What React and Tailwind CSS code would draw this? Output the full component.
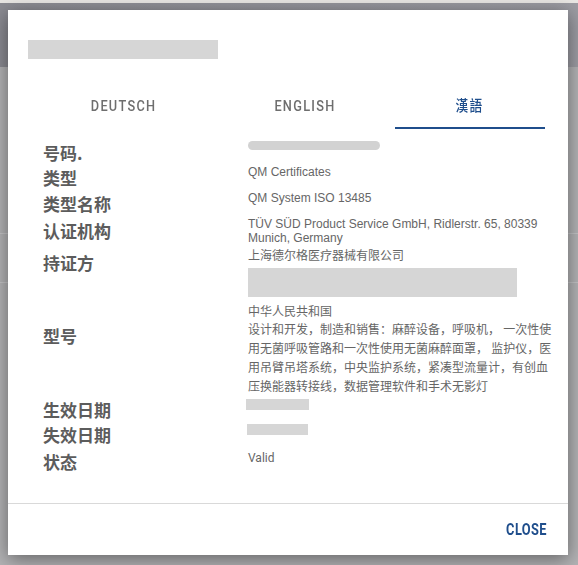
import { useState } from 'react'

const tabs = ['DEUTSCH', 'ENGLISH', '漢語']

export default function App() {
  const [active, setActive] = useState(2)

  return (
    <div className="relative w-[578px] h-[565px] overflow-hidden bg-[#b3b3b5]" style={{ fontFamily: '"Liberation Sans", Arial, sans-serif' }}>
      {/* dimmed page behind the dialog */}
      <div className="h-[3px] bg-[#e9e7e4]"></div>
      <div className="h-[64px] bg-gradient-to-r from-[#8b8b92] via-[#94949b] to-[#9c9ca3]"></div>
      <div className="mt-[166px] h-px bg-[#c4c4c6]"></div>
      <div className="mt-[48px] h-px bg-[#c4c4c6]"></div>

      {/* dialog */}
      <div className="absolute left-[8px] top-[10px] w-[560px] h-[545px] bg-white shadow-[0_4px_18px_rgba(0,0,0,0.45)] flex flex-col">
        <div className="ml-[20px] mt-[30px] w-[190px] h-[19px] bg-[#d6d6d6]"></div>

        {/* tabs */}
        <div className="flex mt-[22px] h-[48px]">
          {tabs.map((t, i) => (
            <button
              key={t}
              onClick={() => setActive(i)}
              className={
                'w-[150px] h-[48px] pt-[4px] flex items-center justify-center border-b-[2px] ' +
                (i === 0 ? 'ml-[41px] ' : i === 1 ? 'ml-[31px] ' : 'ml-[15px] ') +
                (active === i ? 'border-[#1f4e8c] text-[#1f4e8c]' : 'border-transparent text-[#6e6e6e]')
              }
            >
              <span
                className="inline-block scale-x-85 text-[15px] font-medium tracking-[1.5px]"
                style={{ fontFamily: 'Roboto, "Noto Sans CJK TC", sans-serif' }}
              >
                {t}
              </span>
            </button>
          ))}
        </div>

        {/* details */}
        <div className="flex-1 flex flex-col mt-[12px] pl-[35px] text-[12px] text-[#666666]">
          <Row label="号码.">
            <div className="w-[132px] h-[9px] rounded-full bg-[#d2d2d2] blur-[0.6px]"></div>
          </Row>
          <Row label="类型" className="mt-px">
            <div className="-mt-px leading-[14px]">QM Certificates</div>
          </Row>
          <Row label="类型名称" className="mt-[2px]">
            <div className="-mt-px leading-[14px]">QM System ISO 13485</div>
          </Row>
          <Row label="认证机构" className="mt-[3px]">
            <div className="-mt-[2px] leading-[14px]">TÜV SÜD Product Service GmbH, Ridlerstr. 65, 80339 Munich, Germany</div>
          </Row>
          <Row label="持证方" className="mt-[6px]">
            <div className="-mt-[2px] flex flex-col items-start">
              <div className="leading-[14px]">上海德尔格医疗器械有限公司</div>
              <div className="mt-[5px] w-[269px] h-[29px] bg-[#d6d6d6]"></div>
              <div className="mt-[8px] leading-[14px]">中华人民共和国</div>
            </div>
          </Row>
          <Row label="型号" className="mt-[5px]">
            <div className="-mt-[3px] leading-[19px]">
              设计和开发，制造和销售：麻醉设备，呼吸机， 一次性使用无菌呼吸管路和一次性使用无菌麻醉面罩， 监护仪，医用吊臂吊塔系统，中央监护系统，紧凑型流量计，有创血压换能器转接线，数据管理软件和手术无影灯
            </div>
          </Row>
          <Row label="生效日期" className="mt-px">
            <div className="mt-px -ml-[2px] w-[63px] h-[11px] bg-[#d6d6d6]"></div>
          </Row>
          <Row label="失效日期" className="mt-px">
            <div className="mt-px -ml-px w-[61px] h-[11px] bg-[#d6d6d6]"></div>
          </Row>
          <Row label="状态" className="mt-[3px]">
            <div className="mt-px leading-[14px]" style={{ fontFamily: 'Roboto, sans-serif' }}>Valid</div>
          </Row>
        </div>

        {/* footer */}
        <div className="h-px bg-[#d9d9d9]"></div>
        <div className="h-[51px] flex items-center justify-end pr-[16px]">
          <button
            className="inline-block scale-x-80 text-[16px] font-bold tracking-[0.5px] text-[#1f4e8c]"
            style={{ fontFamily: 'Roboto, sans-serif' }}
          >
            CLOSE
          </button>
        </div>
      </div>
    </div>
  )
}

function Row({ label, className = '', children }) {
  return (
    <div className={'flex items-start ' + className}>
      <div
        className="w-[205px] shrink-0 text-[17px] leading-[24px] font-bold text-[#5c5c5c]"
        style={{ fontFamily: '"Noto Sans CJK SC", sans-serif' }}
      >
        {label}
      </div>
      <div className="w-[306px]" style={{ fontFamily: '"Liberation Sans", "Noto Sans CJK SC", sans-serif' }}>
        {children}
      </div>
    </div>
  )
}
